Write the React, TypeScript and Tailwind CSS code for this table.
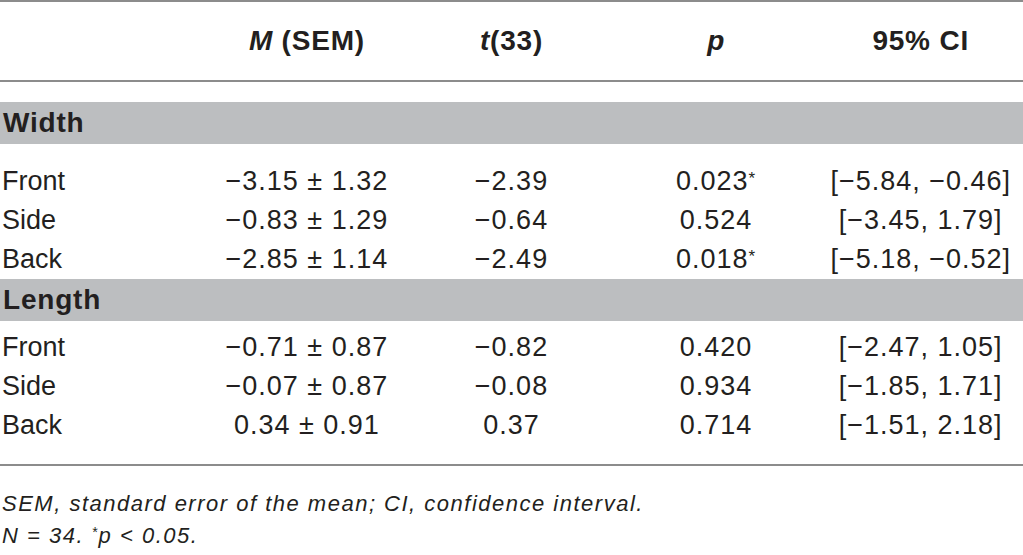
export default function App() {
  const width = [
    ["Front", "−3.15 ± 1.32", "−2.39", "0.023*", "[−5.84, −0.46]"],
    ["Side", "−0.83 ± 1.29", "−0.64", "0.524", "[−3.45, 1.79]"],
    ["Back", "−2.85 ± 1.14", "−2.49", "0.018*", "[−5.18, −0.52]"],
  ];
  const length = [
    ["Front", "−0.71 ± 0.87", "−0.82", "0.420", "[−2.47, 1.05]"],
    ["Side", "−0.07 ± 0.87", "−0.08", "0.934", "[−1.85, 1.71]"],
    ["Back", "0.34 ± 0.91", "0.37", "0.714", "[−1.51, 2.18]"],
  ];

  const Row = ({ cells }: { cells: string[] }) => (
    <div className="grid grid-cols-5 h-[39px] items-center">
      {cells.map((c, i) => (
        <div key={i} className={i === 0 ? "pl-[2px]" : "text-center tracking-[1px]"}>
          {c.endsWith("*") ? (
            <>
              {c.slice(0, -1)}
              <sup className="text-[17px] top-[-0.35em]">*</sup>
            </>
          ) : (
            c
          )}
        </div>
      ))}
    </div>
  );

  return (
    <div
      className="w-[1023px] h-[555px] bg-white text-[#231f20] text-[27px] leading-none overflow-hidden"
      style={{ fontFamily: '"Liberation Sans", Arial, sans-serif' }}
    >
      {/* header */}
      <div className="grid grid-cols-5 h-[82px] items-center border-t-2 border-b-2 border-[#8c8c8c] font-bold text-[28px] tracking-[0.8px]">
        <div />
        <div className="text-center">
          <i>M</i> (SEM)
        </div>
        <div className="text-center">
          <i>t</i>(33)
        </div>
        <div className="text-center">
          <i>p</i>
        </div>
        <div className="text-center">95% CI</div>
      </div>

      {/* Width */}
      <div className="mt-[20px] h-[42px] bg-[#bcbec0] flex items-center pl-[3px] font-bold text-[28px] tracking-[0.8px]">
        Width
      </div>
      <div className="pt-[18px]">
        {width.map((r) => (
          <Row key={r[0]} cells={r} />
        ))}
      </div>

      {/* Length */}
      <div className="h-[42px] bg-[#bcbec0] flex items-center pl-[3px] font-bold text-[28px] tracking-[0.8px]">
        Length
      </div>
      <div className="pt-[7px]">
        {length.map((r) => (
          <Row key={r[0]} cells={r} />
        ))}
      </div>

      <div className="mt-[19px] border-t-2 border-[#8c8c8c]" />

      {/* footnote */}
      <div className="pt-[22px] pl-[2px] italic text-[22px] leading-[32px] tracking-[1.5px]">
        <div>SEM, standard error of the mean; CI, confidence interval.</div>
        <div>
          N = 34. <sup className="text-[14px] top-[-0.4em]">*</sup>p &lt; 0.05.
        </div>
      </div>
    </div>
  );
}
